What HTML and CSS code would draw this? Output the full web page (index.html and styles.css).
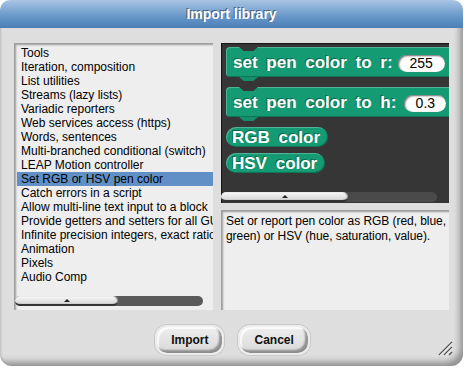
FILE: index.html
```html
<!DOCTYPE html>
<html lang="en">
<head>
    <meta charset="UTF-8">
    <title>Import library</title>
    <link rel="stylesheet" href="styles.css">
</head>
<body>
    <div class="dialog">
        <div class="titlebar">Import library</div>

        <div class="content">
            <div class="panes">
                <div class="list-pane">
                    <ul class="libs">
                        <li>Tools</li>
                        <li>Iteration, composition</li>
                        <li>List utilities</li>
                        <li>Streams (lazy lists)</li>
                        <li>Variadic reporters</li>
                        <li>Web services access (https)</li>
                        <li>Words, sentences</li>
                        <li>Multi-branched conditional (switch)</li>
                        <li>LEAP Motion controller</li>
                        <li class="selected">Set RGB or HSV pen color</li>
                        <li>Catch errors in a script</li>
                        <li>Allow multi-line text input to a block</li>
                        <li>Provide getters and setters for all GUI-controlled global settings</li>
                        <li>Infinite precision integers, exact rationals, complex</li>
                        <li>Animation</li>
                        <li>Pixels</li>
                        <li>Audio Comp</li>
                    </ul>
                    <div class="hscroll light">
                        <div class="thumb" style="width: 103px"><span class="dot"></span></div>
                    </div>
                </div>

                <div class="right-col">
                    <div class="palette">
                        <div class="block command">
                            <span class="label">set pen color to r:</span>
                            <span class="slot">255</span>
                        </div>
                        <div class="block command">
                            <span class="label">set pen color to h:</span>
                            <span class="slot slot-h">0.3</span>
                        </div>
                        <div class="block reporter">RGB color</div>
                        <div class="block reporter">HSV color</div>

                        <div class="hscroll dark">
                            <div class="thumb" style="width: 127px"><span class="dot"></span></div>
                        </div>
                    </div>
                    <div class="notes">
                        Set or report pen color as RGB (red, blue, green) or HSV (hue, saturation, value).
                    </div>
                </div>
            </div>

            <div class="buttons">
                <button type="button">Import</button>
                <button type="button">Cancel</button>
            </div>

            <svg class="grip" width="16" height="16" viewBox="0 0 16 16">
                <path d="M2 15 L15 2 M7 15 L15 7 M12 15 L15 12" stroke="#555" stroke-width="1.4" fill="none"/>
                <path d="M3 15.5 L15.5 3 M8 15.5 L15.5 8" stroke="#fff" stroke-width="0.8" fill="none"/>
            </svg>
        </div>
    </div>
</body>
</html>
```

FILE: styles.css
```css
body {
    margin: 0;
    padding: 0;
    background-color: #fff;
    font-family: "Liberation Sans", Arial, sans-serif;
}

.dialog {
    width: 463px;
    height: 366px;
    background-color: #dedede;
    border-radius: 10px 10px 12px 12px;
    box-shadow: inset -6px -7px 6px -3px rgba(0, 0, 0, 0.35),
                inset 2px 0 2px -1px rgba(0, 0, 0, 0.15);
    overflow: hidden;
    display: flex;
    flex-direction: column;
}

.titlebar {
    height: 28px;
    line-height: 29px;
    text-align: center;
    color: #fff;
    font-weight: bold;
    font-size: 14px;
    text-shadow: -1px -1px 0 rgba(0, 0, 0, 0.45);
    background: linear-gradient(#a8c5e3, #6b9acb 55%, #4a7fb7);
    border-radius: 10px 10px 0 0;
}

.content {
    position: relative;
    flex: 1;
    padding: 15px 14px 0 14px;
}

.panes {
    display: flex;
    height: 267px;
}

/* library list on the left */
.list-pane {
    width: 199px;
    background-color: #eeeeee;
    box-shadow: inset 2px 2px 2px rgba(0, 0, 0, 0.35);
    display: flex;
    flex-direction: column;
    overflow: hidden;
}

.libs {
    list-style: none;
    margin: 0;
    padding: 3px 0 0 3px;
    font-size: 12px;
    line-height: 14px;
    color: #000;
    flex: 1;
}

.libs li {
    padding-left: 4px;
    white-space: nowrap;
    overflow: hidden;
}

.libs li.selected {
    background-color: #6090c6;
}

/* horizontal scroll bars */
.hscroll {
    height: 10px;
    border-radius: 5px;
    display: flex;
}

.hscroll.light {
    width: 188px;
    margin: 0 0 4px 1px;
    background-color: #5a5a5a;
}

.hscroll.dark {
    width: 216px;
    margin: 19px 0 0 0;
    background-color: #4a4a4a;
}

.thumb {
    height: 8px;
    border-radius: 5px;
    background: linear-gradient(#fafafa, #d6d6d6);
    border-bottom: 2px solid #333;
    box-shadow: inset -1px 0 1px #888;
    display: flex;
    align-items: center;
    justify-content: center;
}

.dot {
    width: 0;
    height: 0;
    border-left: 3px solid transparent;
    border-right: 3px solid transparent;
    border-bottom: 3px solid #222;
}

/* block palette on the right */
.right-col {
    width: 228px;
    margin-left: 8px;
    display: flex;
    flex-direction: column;
}

.palette {
    height: 160px;
    background-color: #363636;
    box-shadow: inset 1px 1px 1px rgba(0, 0, 0, 0.6);
    padding-top: 4px;
    box-sizing: border-box;
    overflow: hidden;
}

.block {
    color: #fff;
    font-weight: bold;
    font-size: 17px;
    word-spacing: 4px;
    background-color: #159b74;
    text-shadow: -1px -1px 0 rgba(0, 0, 0, 0.35);
    box-shadow: inset 1px 1px 0 rgba(255, 255, 255, 0.25),
                inset -1px -1px 0 rgba(0, 0, 0, 0.25);
    margin-left: 5px;
    white-space: nowrap;
}

.command {
    position: relative;
    width: 240px;
    height: 30px;
    border-radius: 4px;
    display: flex;
    align-items: center;
    padding: 2px 0 0 7px;
    box-sizing: border-box;
    margin-bottom: 10px;
}

/* top notch (dent) and bottom bump of a command block */
.command::before {
    content: "";
    position: absolute;
    top: 0;
    left: 13px;
    width: 19px;
    height: 4px;
    background-color: #363636;
    clip-path: polygon(0 0, 100% 0, 75% 100%, 25% 100%);
}

.command::after {
    content: "";
    position: absolute;
    bottom: -4px;
    left: 13px;
    width: 19px;
    height: 4px;
    background-color: #138f6b;
    clip-path: polygon(0 0, 100% 0, 75% 100%, 25% 100%);
}

.slot {
    display: inline-block;
    width: 47px;
    height: 17px;
    line-height: 17px;
    margin-left: 5px;
    border-radius: 9px;
    background-color: #fff;
    color: #000;
    font-weight: normal;
    font-size: 14px;
    word-spacing: 0;
    text-align: center;
    text-shadow: none;
    box-shadow: inset 1px 1px 2px rgba(0, 0, 0, 0.6);
}

.slot-h {
    width: 42px;
    margin-left: 8px;
}

.reporter {
    display: block;
    width: fit-content;
    height: 20px;
    line-height: 21px;
    padding: 0 8px 0 6px;
    border-radius: 10px;
    margin-bottom: 6px;
}

.notes {
    margin-top: 7px;
    height: 100px;
    background-color: #eeeeee;
    box-shadow: inset 2px 2px 2px rgba(0, 0, 0, 0.35);
    font-size: 12px;
    line-height: 15px;
    letter-spacing: -0.05px;
    padding: 4px 0 0 5px;
    box-sizing: border-box;
    color: #000;
}

/* bottom buttons */
.buttons {
    display: flex;
    justify-content: center;
    gap: 14px;
    margin-top: 15px;
    padding-left: 2px;
}

.buttons button {
    font-family: "Liberation Sans", Arial, sans-serif;
    font-weight: bold;
    font-size: 12px;
    color: #111;
    height: 30px;
    padding: 0 14px;
    min-width: 66px;
    border: 2px solid #ececec;
    border-radius: 12px;
    background: linear-gradient(#eeeeee, #d8d8d8);
    box-shadow: inset -3px -3px 2px rgba(0, 0, 0, 0.35),
                inset 2px 2px 1px rgba(255, 255, 255, 0.8),
                0 0 0 1px #c8c8c8;
    cursor: pointer;
}

.grip {
    position: absolute;
    right: 10px;
    bottom: 10px;
}
```
